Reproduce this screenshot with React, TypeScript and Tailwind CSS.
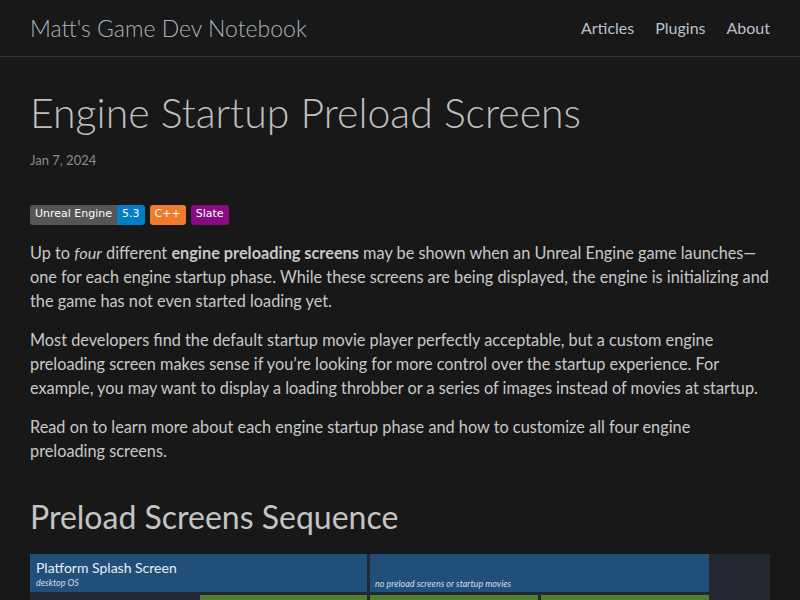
const Badge = ({ label, bg }: { label: string; bg: string }) => (
  <span className={`inline-flex h-[20px] items-center rounded-[3px] px-[5px] text-[11px] text-white ${bg}`}>
    {label}
  </span>
);

const App = () => {
  return (
    <div className="min-h-screen bg-[#181818] text-[#c8c8c8] font-['Lato',sans-serif]">
      {/* Header */}
      <header className="border-b border-[#333333]">
        <div className="flex h-[56px] items-center justify-between px-[30px]">
          <a className="text-[23px] font-light text-[#a9b4bf]">Matt's Game Dev Notebook</a>
          <nav className="flex gap-[21px] text-[16px] text-[#b9c2cc]">
            <a>Articles</a>
            <a>Plugins</a>
            <a>About</a>
          </nav>
        </div>
      </header>

      <main className="px-[30px]">
        <h1 className="mt-[28px] text-[41px] font-light leading-[56px] text-[#bfbfbf]">
          Engine Startup Preload Screens
        </h1>
        <p className="mt-[10px] text-[13px] text-[#8c8c8c]">Jan 7, 2024</p>

        {/* Badges */}
        <div className="mt-[34px] flex items-center gap-[5px] font-['DejaVu_Sans',sans-serif]">
          <span className="inline-flex overflow-hidden rounded-[3px]">
            <span className="flex h-[20px] items-center bg-[#555555] px-[5px] text-[11px] text-white">Unreal Engine</span>
            <span className="flex h-[20px] items-center bg-[#007ec6] px-[5px] text-[11px] text-white">5.3</span>
          </span>
          <Badge label="C++" bg="bg-[#f07b2f]" />
          <Badge label="Slate" bg="bg-[#870b81]" />
        </div>

        <div className="mt-[16px] space-y-[15px] text-[16.3px] leading-[24px]">
          <p>
            Up to <em>four</em> different <strong className="font-bold">engine preloading screens</strong> may be shown when an Unreal Engine game launches—one for each engine startup phase. While these screens are being displayed, the engine is initializing and the game has not even started loading yet.
          </p>
          <p>
            Most developers find the default startup movie player perfectly acceptable, but a custom engine preloading screen makes sense if you’re looking for more control over the startup experience. For example, you may want to display a loading throbber or a series of images instead of movies at startup.
          </p>
          <p>
            Read on to learn more about each engine startup phase and how to customize all four engine
            <br />
            preloading screens.
          </p>
        </div>

        <h2 className="mt-[32px] text-[32px] leading-[44px] text-[#c4c4c4]">Preload Screens Sequence</h2>

        {/* Diagram */}
        <div className="mt-[15px] bg-[#232833] pb-[20px]">
          <div className="flex gap-[3px]">
            <div className="h-[38px] w-[337px] bg-[#20507a] px-[6px] pt-[5px]">
              <div className="text-[14px] leading-[18px] text-[#e8eef4]">Platform Splash Screen</div>
              <div className="text-[9px] italic leading-[12px] text-[#d5dde6]">desktop OS</div>
            </div>
            <div className="flex h-[38px] w-[339px] items-end bg-[#20507a] px-[5px] pb-[2px]">
              <div className="text-[9px] italic leading-[12px] text-[#d5dde6]">no preload screens or startup movies</div>
            </div>
          </div>
          <div className="mt-[3px] flex gap-[3px]">
            <div className="w-[167px]" />
            <div className="h-[38px] w-[167px] bg-[#4f7f35]" />
            <div className="h-[38px] w-[168px] bg-[#4f7f35]" />
            <div className="h-[38px] w-[168px] bg-[#4f7f35]" />
          </div>
        </div>
      </main>
    </div>
  );
};

export default App;
